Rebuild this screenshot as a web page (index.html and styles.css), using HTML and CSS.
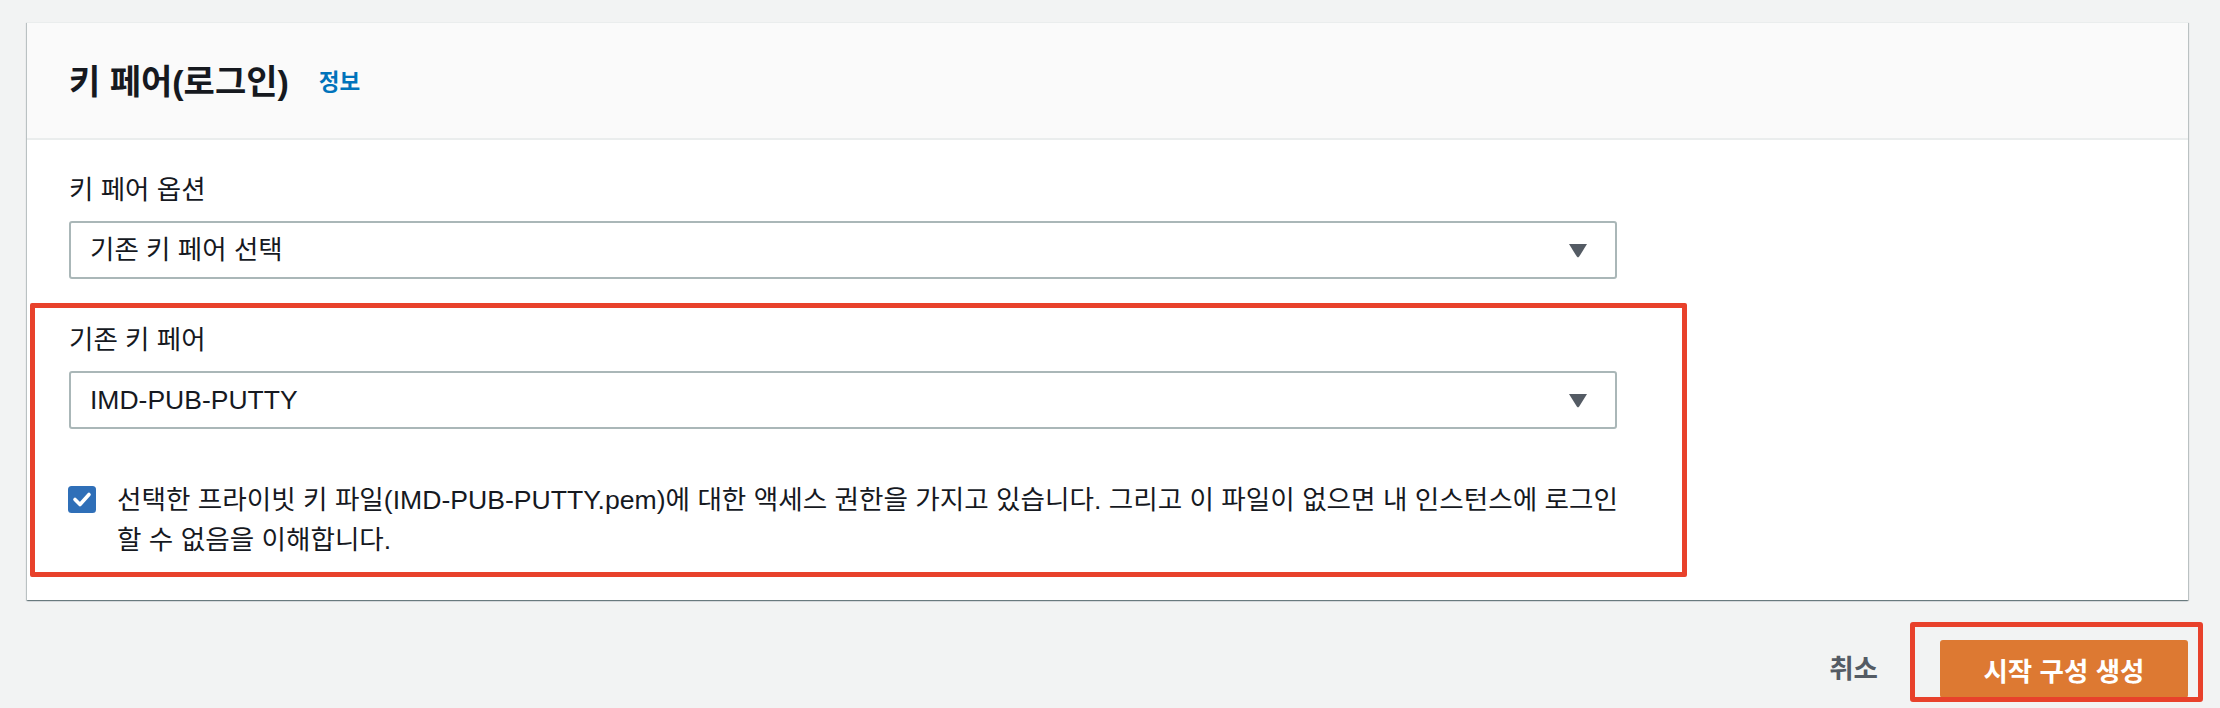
FILE: index.html
```html
<!DOCTYPE html>
<html lang="ko">
<head>
<meta charset="utf-8">
<title>키 페어(로그인)</title>
<link rel="stylesheet" href="styles.css">
</head>
<body>
<div class="page">
  <section class="card">
    <header class="card-header">
      <h2 class="card-title">키 페어(로그인)</h2>
      <a class="info-link" href="#">정보</a>
    </header>
    <div class="card-body">
      <div class="field">
        <div class="field-label">키 페어 옵션</div>
        <div class="select">
          <span class="select-text">기존 키 페어 선택</span>
          <svg class="caret" width="20" height="15" viewBox="0 0 20 15"><path d="M1 1 H19 L11.2 13.6 Q10 15.2 8.8 13.6 Z" fill="#545b64"/></svg>
        </div>
      </div>
      <div class="highlight">
        <div class="field">
          <div class="field-label">기존 키 페어</div>
          <div class="select">
            <span class="select-text">IMD-PUB-PUTTY</span>
            <svg class="caret" width="20" height="15" viewBox="0 0 20 15"><path d="M1 1 H19 L11.2 13.6 Q10 15.2 8.8 13.6 Z" fill="#545b64"/></svg>
          </div>
        </div>
        <label class="ack">
          <span class="checkbox">
            <svg width="28" height="27" viewBox="0 0 28 27"><rect x="0" y="0" width="28" height="27" rx="3.5" fill="#2f6fb8"/><path d="M7 13.5 L12 18.5 L21 8.5" fill="none" stroke="#fff" stroke-width="3.6" stroke-linecap="round" stroke-linejoin="round"/></svg>
          </span>
          <span class="ack-text">선택한 프라이빗 키 파일(IMD-PUB-PUTTY.pem)에 대한 액세스 권한을 가지고 있습니다. 그리고 이 파일이 없으면 내 인스턴스에 로그인 할 수 없음을 이해합니다.</span>
        </label>
      </div>
    </div>
  </section>
  <div class="actions">
    <a class="cancel" href="#">취소</a>
    <div class="primary-wrap">
      <button class="primary" type="button">시작 구성 생성</button>
      <span class="annot"></span>
    </div>
  </div>
</div>
</body>
</html>
```
FILE: styles.css
```css
html, body {
  margin: 0;
  padding: 0;
}
body {
  background: #f2f3f3;
  font-family: "Liberation Sans", "Noto Sans CJK KR", sans-serif;
  color: #16191f;
  overflow: hidden;
  height: 708px;
}
.page {
  padding: 22px 32px 0 27px;
}
.card {
  background: #ffffff;
  box-shadow: 0 1px 1px 0 rgba(0, 28, 36, 0.35), 1px 1px 1px 0 rgba(0, 28, 36, 0.18), -1px 1px 1px 0 rgba(0, 28, 36, 0.18);
  border-top: 1px solid #eaeded;
}
.card-header {
  background: #fafafa;
  border-bottom: 2px solid #eaeded;
  display: flex;
  align-items: center;
  padding: 3px 0 0 42px;
  box-sizing: border-box;
  height: 117px;
}
.card-title {
  margin: 0;
  font-size: 34px;
  font-weight: 700;
  line-height: 40px;
  color: #16191f;
}
.info-link {
  margin-left: 30px;
  font-size: 22.5px;
  font-weight: 700;
  line-height: 40px;
  color: #0073bb;
  text-decoration: none;
  padding-top: 2px;
}
.card-body {
  padding: 30px 42px 23px 42px;
}
.field-label {
  font-size: 26.5px;
  line-height: 40px;
}
.select {
  margin-top: 11px;
  width: 1548px;
  height: 58px;
  box-sizing: border-box;
  border: 2px solid #aab7b8;
  border-radius: 3px;
  display: flex;
  align-items: center;
  justify-content: space-between;
  padding: 0 27px 0 19px;
  background: #fff;
}
.select-text {
  font-size: 26.5px;
  line-height: 40px;
}
.caret {
  display: block;
  margin-top: 1px;
}
.highlight {
  margin: 24px 0 0 -39px;
  width: 1657px;
  box-sizing: border-box;
  border: 5px solid #e8412b;
  border-radius: 2px;
  padding: 12px 0 12px 34px;
}
.ack {
  display: flex;
  align-items: flex-start;
  margin-top: 51px;
}
.checkbox {
  display: block;
  width: 28px;
  height: 27px;
  margin: 6px 21px 0 -1px;
  flex: none;
}
.checkbox svg {
  display: block;
}
.ack-text {
  font-size: 26.6px;
  line-height: 40px;
  width: 1506px;
}
.actions {
  display: flex;
  justify-content: flex-end;
  align-items: center;
  margin-top: 40px;
}
.cancel {
  font-size: 26.5px;
  font-weight: 700;
  color: #545b64;
  text-decoration: none;
  line-height: 40px;
  margin-right: 62px;
}
.primary-wrap {
  position: relative;
}
.primary {
  display: block;
  width: 248px;
  height: 58px;
  border: none;
  border-radius: 3px;
  background: #dd7932;
  color: #ffffff;
  font-family: "Liberation Sans", "Noto Sans CJK KR", sans-serif;
  font-size: 26.5px;
  font-weight: 700;
  padding: 0;
}
.annot {
  position: absolute;
  left: -30px;
  top: -18px;
  width: 293px;
  height: 80px;
  box-sizing: border-box;
  border: 5px solid #e8412b;
  border-radius: 3px;
  pointer-events: none;
}
```
